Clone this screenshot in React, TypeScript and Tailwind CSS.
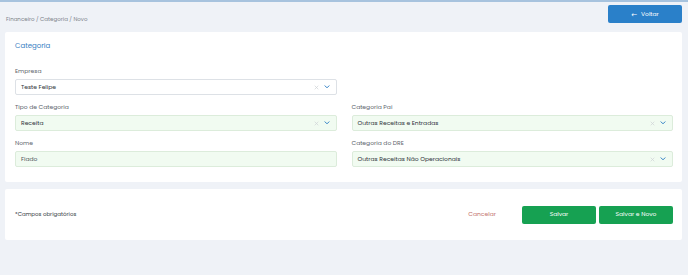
import React from "react";

const font = { fontFamily: "Poppins, 'DejaVu Sans', sans-serif" };

function Chevron() {
  return (
    <svg width="6" height="4" viewBox="0 0 6 4" className="text-[#2f7fc4]">
      <path d="M1 0.8 L3 2.8 L5 0.8" fill="none" stroke="currentColor" strokeWidth="1" strokeLinecap="round" strokeLinejoin="round" />
    </svg>
  );
}

function Clear() {
  return (
    <svg width="5" height="5" viewBox="0 0 5 5" className="text-[#cfd2d6]">
      <path d="M0.7 0.7 L4.3 4.3 M4.3 0.7 L0.7 4.3" fill="none" stroke="currentColor" strokeWidth="0.7" />
    </svg>
  );
}

function Select({ value, filled }: { value: string; filled?: boolean }) {
  return (
    <div
      className={`h-[16px] flex items-center pl-[5px] pr-[6px] rounded-[2px] border ${
        filled ? "bg-[#f1fbf1] border-[#dcecdb]" : "bg-white border-[#dde1e6]"
      }`}
    >
      <span className="flex-1 text-[6px] text-[#30353c] leading-none">{value}</span>
      <Clear />
      <span className="w-[5px]" />
      <Chevron />
    </div>
  );
}

function Field({ label, children }: { label: string; children: React.ReactNode }) {
  return (
    <div className="flex flex-col">
      <div className="h-[8px] mb-[4px] text-[6px] leading-[8px] text-[#60666e]">{label}</div>
      {children}
    </div>
  );
}

export default function App() {
  return (
    <div className="w-[688px] h-[275px] bg-[#eff2f7] border-t-2 border-[#a7c3de] overflow-hidden" style={font}>
      <div className="pl-[5px] pr-[6px]">
        <div className="flex justify-between items-start h-[30px]">
          <div className="pt-[14px] pl-[1px] text-[5.5px] text-[#80858c] leading-[6px]">
            Financeiro / Categoria / Novo
          </div>
          <button className="mt-[3px] w-[74px] h-[18px] rounded-[2px] bg-[#2a80c9] text-white text-[6px] flex items-center justify-center gap-[4px]">
            <span className="text-[7px] leading-none">←</span>
            <span>Voltar</span>
          </button>
        </div>
        <div className="bg-white rounded-[2px] pt-[9px] pb-[15px] pl-[10px] pr-[9px]">
          <div className="h-[9px] text-[7px] leading-[9px] text-[#3a7fc3]">Categoria</div>
          <div className="mt-[17px] grid grid-cols-2 gap-x-[15px] gap-y-[8px]">
            <Field label="Empresa">
              <Select value="Teste Felipe" />
            </Field>
            <div />
            <Field label="Tipo de Categoria">
              <Select value="Receita" filled />
            </Field>
            <Field label="Categoria Pai">
              <Select value="Outras Receitas e Entradas" filled />
            </Field>
            <Field label="Nome">
              <div className="h-[16px] flex items-center pl-[5px] rounded-[2px] border bg-[#f1fbf1] border-[#dcecdb] text-[6px] text-[#50565e]">
                Fiado
              </div>
            </Field>
            <Field label="Categoria do DRE">
              <Select value="Outras Receitas Não Operacionais" filled />
            </Field>
          </div>
        </div>
        <div className="mt-[7px] h-[51px] bg-white rounded-[2px] flex items-center pl-[10px] pr-[9px]">
          <div className="flex-1 text-[5.5px] text-[#3a3f46]">*Campos obrigatórios</div>
          <div className="text-[6px] text-[#c3746e] mr-[26px]">Cancelar</div>
          <button className="w-[74px] h-[18px] rounded-[2px] bg-[#16a152] text-white text-[6px]">Salvar</button>
          <button className="ml-[3px] w-[74px] h-[18px] rounded-[2px] bg-[#16a152] text-white text-[6px]">Salvar e Novo</button>
        </div>
      </div>
    </div>
  );
}
